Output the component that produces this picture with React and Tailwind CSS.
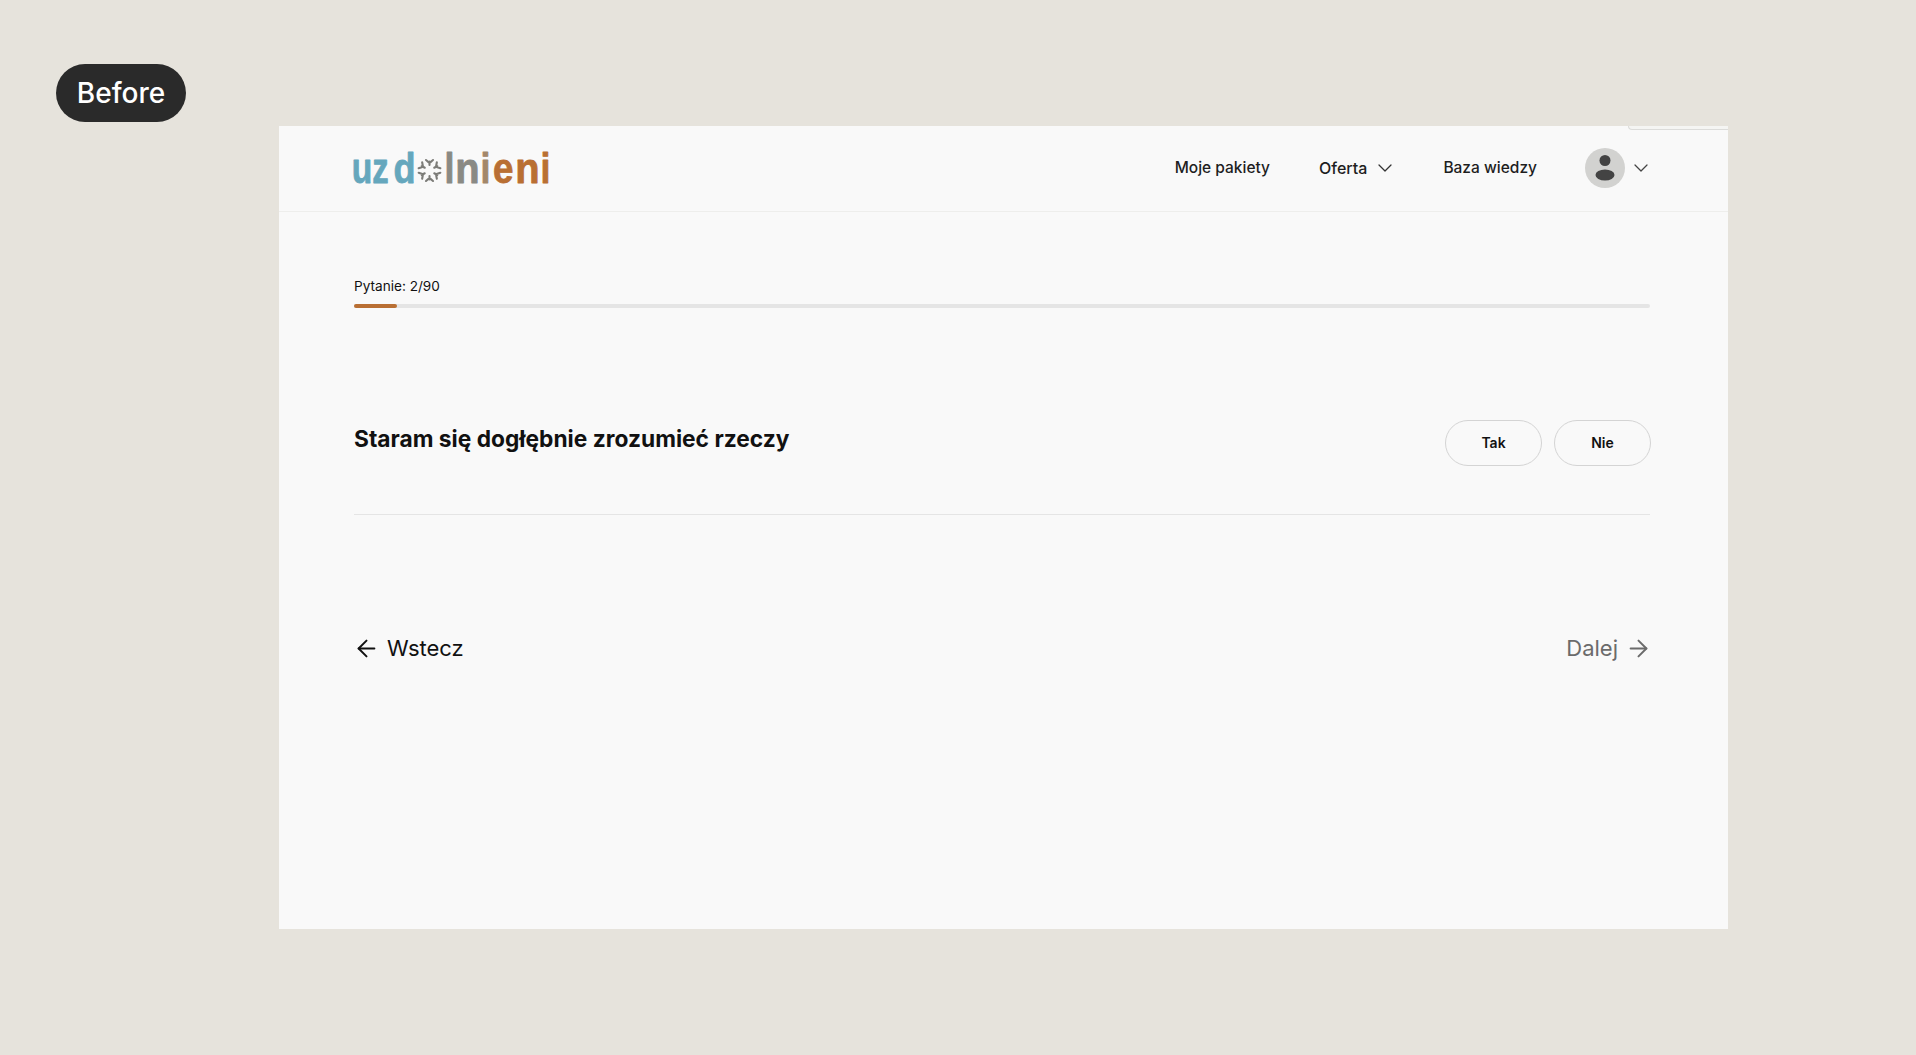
import React from "react";
import { ChevronDown, ArrowLeft, ArrowRight } from "lucide-react";

const inter = "font-['Inter',sans-serif]";

function Logo() {
  const blue = "#65a7bd";
  const gray = "#8a8a84";
  const mix = "#a3876a";
  const orange = "#b96f33";
  // char, ink left, horizontal scale, left bearing (em), colour
  const letters = [
    ["u", 0, 0.8, 0.066, blue],
    ["z", 19, 0.78, 0.02, blue],
    ["d", 41, 0.86, 0.04, blue],
    ["l", 93, 0.85, 0.07, gray],
    ["n", 104, 0.95, 0.066, gray],
    ["i", 129, 0.85, 0.07, mix],
    ["e", 140, 0.875, 0.03, orange],
    ["n", 164, 0.95, 0.066, orange],
    ["i", 189, 0.85, 0.07, orange],
  ];
  return (
    <svg width="196" height="36" viewBox="0 0 196 36" className="block overflow-visible">
      {letters.map(([c, x, sx, lsb, col], i) => (
        <text
          key={i}
          transform={`translate(${x - lsb * 42 * sx} 32.7) scale(${sx} 1)`}
          fill={col}
          stroke={col}
          strokeWidth="0.8"
          strokeLinejoin="round"
          fontFamily="'Liberation Sans', sans-serif"
          fontWeight="700"
          fontSize="42"
        >
          {c}
        </text>
      ))}
      <g transform="translate(75.5 20.5)" stroke="#7c7c78" strokeWidth="2.1" fill="none" strokeLinecap="round">
        {[0, 60, 120, 180, 240, 300].map((a) => (
          <g key={a} transform={`rotate(${a})`}>
            <path d="M0 -5.5 V-9 M-3.5 -10.5 L0 -7.5 L3.5 -10.5" />
          </g>
        ))}
      </g>
    </svg>
  );
}

function Avatar() {
  return (
    <svg width="40" height="40" viewBox="0 0 40 40" className="block">
      <circle cx="20" cy="20" r="20" fill="#d2d2d0" />
      <circle cx="20" cy="12.5" r="5.5" fill="#434343" />
      <ellipse cx="20" cy="27" rx="9.5" ry="5.5" fill="#434343" />
    </svg>
  );
}

export default function App() {
  return (
    <div className={`${inter} relative h-[1055px] overflow-hidden bg-[#e6e3dc] pl-[56px] pt-[64px]`}>
      <div className="flex h-[58px] w-[130px] items-center justify-center rounded-full bg-[#2a2a2a] text-[28px] font-medium text-white">
        Before
      </div>

      <div className="relative ml-[223px] mt-[4px] h-[803px] w-[1449px] bg-[#f9f9f9]">
        <div className="absolute right-0 top-0 h-[4px] w-[100px] rounded-bl-[6px] border-b border-l border-[#dcdcda] bg-[#f5f5f3]" />

        <header className="flex h-[86px] items-center justify-between border-b border-[#eeeeec] pb-[2px] pl-[75px] pr-[75px]">
          <Logo />
          <nav className="flex items-center text-[15.5px] font-medium leading-[24px] text-[#1e1e1e]">
            <span className="pt-[1px]">Moje pakiety</span>
            <span className="ml-[49px] text-[16px]">Oferta</span>
            <ChevronDown className="ml-[6px] size-[24px] text-[#333]" strokeWidth={1.25} />
            <span className="ml-[46px] pt-[1px]">Baza wiedzy</span>
            <span className="ml-[48px]"><Avatar /></span>
            <ChevronDown className="ml-[4px] size-[24px] text-[#444]" strokeWidth={1.25} />
          </nav>
        </header>

        <main className="pl-[75px] pr-[78px]">
          <div className="mt-[64px] text-[13.6px] leading-[20px] text-[#111]">Pytanie: 2/90</div>
          <div className="mt-[8px] h-[4px] rounded-full bg-[#e5e5e5]">
            <div className="h-full w-[43px] rounded-full bg-[#b96f33]" />
          </div>

          <div className="mt-[112px] flex items-start justify-between border-b border-[#e5e5e5] pb-[48px]">
            <h1 className="mt-[3px] text-[22.75px] font-bold leading-[32px] text-[#111]">
              Staram się dogłębnie zrozumieć rzeczy
            </h1>
            <div className="-mr-[1px] flex gap-[12px]">
              <button className="h-[46px] w-[97px] rounded-full border border-[#d4d4d4] pb-[1px] text-[14px] font-semibold text-[#111]">Tak</button>
              <button className="h-[46px] w-[97px] rounded-full border border-[#d4d4d4] pb-[1px] text-[14px] font-semibold text-[#111]">Nie</button>
            </div>
          </div>

          <div className="mt-[117px] flex items-center justify-between text-[22px] leading-[32px]">
            <div className="flex items-center gap-[7px] text-[#111]">
              <ArrowLeft className="-ml-[1px] size-[27px]" strokeWidth={1.75} />
              <span>Wstecz</span>
            </div>
            <div className="flex items-center gap-[7px] text-[#6b6b6b]">
              <span>Dalej</span>
              <ArrowRight className="-mr-[2px] size-[27px]" strokeWidth={1.75} />
            </div>
          </div>
        </main>
      </div>
    </div>
  );
}
